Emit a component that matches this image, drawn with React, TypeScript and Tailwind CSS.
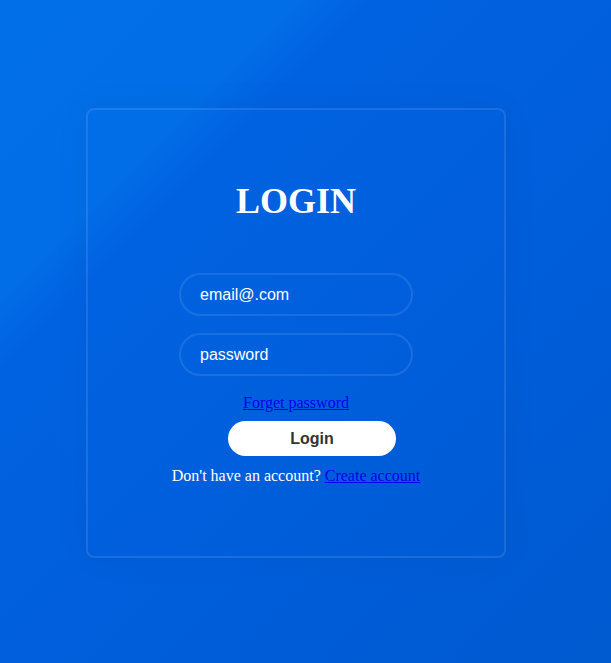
import React from "react";

const serif = "font-['Liberation_Serif','Times_New_Roman',serif]";
const sans = "font-['Liberation_Sans',Arial,sans-serif]";

export default function App() {
  return (
    <div className="min-h-[663px] w-full overflow-hidden bg-[linear-gradient(135deg,#016fe8_0%,#016ee7_23%,#0162e1_29%,#005edb_60%,#005ad0_100%)] pt-[108px]">
      <div className="ml-[86px] flex h-[450px] w-[420px] flex-col items-center rounded-lg border-2 border-white/10 pt-[71px] shadow-[0_0_40px_rgba(0,0,0,0.04)]">
        <h2 className={`${serif} text-[36px] font-bold leading-[40px] text-white`}>LOGIN</h2>

        <div className="mt-[52px] flex flex-col gap-[17px]">
          <input
            type="text"
            placeholder="email@.com"
            className={`${sans} h-[43px] w-[234px] rounded-full border-2 border-white/10 bg-transparent px-[19px] text-[16px] text-white outline-none placeholder:text-white`}
          />
          <input
            type="password"
            placeholder="password"
            className={`${sans} h-[43px] w-[234px] rounded-full border-2 border-white/10 bg-transparent px-[19px] text-[16px] text-white outline-none placeholder:text-white`}
          />
        </div>

        <a href="#" className={`${serif} mt-[18px] text-[16px] leading-[18px] text-[#0000ee] underline`}>
          Forget password
        </a>

        <button className={`${sans} ml-8 mt-[9px] h-[35px] w-[168px] rounded-full bg-white text-[16px] font-bold text-[#333]`}>
          Login
        </button>

        <p className={`${serif} mt-[11px] text-[16px] leading-[18px] text-white`}>
          Don't have an account?{" "}
          <a href="#" className="text-[#0000ee] underline">
            Create account
          </a>
        </p>
      </div>
    </div>
  );
}
